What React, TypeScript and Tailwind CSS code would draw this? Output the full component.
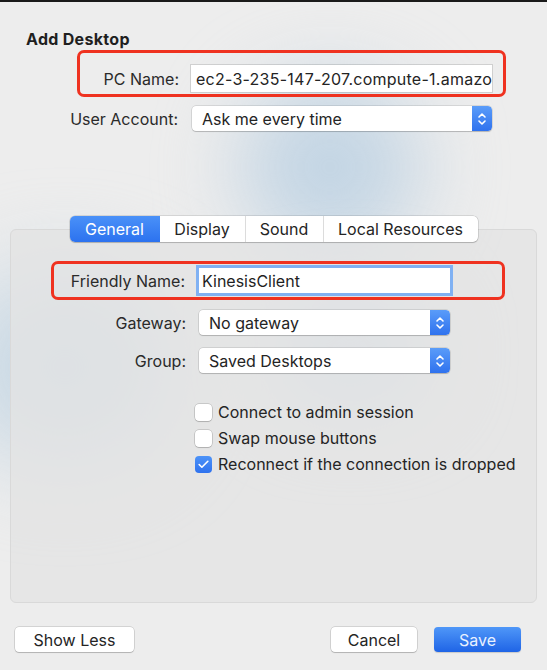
import { Check } from 'lucide-react';

function Stepper() {
  return (
    <div className="flex h-full w-[20px] shrink-0 flex-col items-center justify-center rounded-r-[4px] bg-[linear-gradient(180deg,#5a9cf9_0%,#2f72ee_100%)]">
      <svg width="10" height="16" viewBox="0 0 10 16" fill="none" stroke="white" strokeWidth="1.6" strokeLinecap="round" strokeLinejoin="round">
        <path d="M2 6 L5 3 L8 6" />
        <path d="M2 10 L5 13 L8 10" />
      </svg>
    </div>
  );
}

function Select({ value, width }: { value: string; width: string }) {
  return (
    <div className={`flex h-[25px] ${width} items-center overflow-hidden rounded-[4px] bg-white shadow-[0_0_0_0.5px_rgba(0,0,0,0.18),0_1px_1px_rgba(0,0,0,0.15)]`}>
      <div className="flex-1 truncate pl-[10px] text-[16px] text-[#242424]">{value}</div>
      <Stepper />
    </div>
  );
}

function CheckRow({ label, checked }: { label: string; checked?: boolean }) {
  return (
    <div className="flex h-[26px] items-center gap-[6px]">
      {checked ? (
        <div className="flex h-[17px] w-[17px] items-center justify-center rounded-[4px] bg-[linear-gradient(180deg,#4d93f8_0%,#2f72ee_100%)]">
          <Check size={13} strokeWidth={3} color="white" />
        </div>
      ) : (
        <div className="h-[17px] w-[17px] rounded-[4px] bg-white shadow-[0_0_0_0.5px_rgba(0,0,0,0.25),0_1px_1px_rgba(0,0,0,0.12)]" />
      )}
      <span className="text-[16px] text-[#242424]">{label}</span>
    </div>
  );
}

export default function App() {
  const tabs = ['General', 'Display', 'Sound', 'Local Resources'];
  const tabWidths = ['w-[90px]', 'w-[85px]', 'w-[78px]', 'w-[155px]'];

  return (
    <div
      className="relative h-[670px] w-[547px] overflow-hidden border-t-2 border-[#1a1a1a] bg-[#ededed] text-[#242424]"
      style={{ fontFamily: 'Inter, "Noto Sans", sans-serif' }}
    >
      {/* soft blue blur behind the dialog */}
      <div className="pointer-events-none absolute left-[240px] top-[80px] h-[170px] w-[180px] rounded-full bg-[#c3d5e4] blur-[40px]" />
      <div className="pointer-events-none absolute left-[-40px] top-[270px] h-[190px] w-[210px] rounded-full bg-[#c6d7e4] blur-[45px]" />
      <div className="pointer-events-none absolute left-[270px] top-[290px] h-[120px] w-[160px] rounded-full bg-[#c8d9e6] blur-[40px]" />

      <div className="relative flex flex-col">
        <div className="ml-[26px] mt-[28px] text-[16px] font-bold leading-[19px] tracking-[0.3px] text-[#1f1f1f]">Add Desktop</div>

        {/* PC Name */}
        <div className="ml-[77px] mt-[1px] h-[47px] w-[429px] rounded-[7px] border-[3px] border-[#ef3220] pt-[12px]">
          <div className="flex items-center">
            <div className="w-[99px] text-right text-[16px] text-[#2a2a2a]">PC Name:</div>
            <div className="ml-[12px] flex h-[27px] w-[301px] items-center overflow-hidden bg-white shadow-[0_0_0_1px_rgba(0,0,0,0.12)]">
              <span className="whitespace-nowrap pl-[5px] text-[16px] tracking-[0.25px] text-[#242424]">ec2-3-235-147-207.compute-1.amazo</span>
            </div>
          </div>
        </div>

        {/* User Account */}
        <div className="mt-[9px] flex items-center">
          <div className="w-[178px] text-right text-[16px] text-[#2a2a2a]">User Account:</div>
          <div className="ml-[14px]">
            <Select value="Ask me every time" width="w-[300px]" />
          </div>
        </div>

        {/* Tab view */}
        <div className="mt-[85px] flex flex-col">
          <div className="relative z-10 -mb-[13px] flex justify-center">
            <div className="flex h-[26px] overflow-hidden rounded-[5px] bg-white shadow-[0_0_0_0.5px_rgba(0,0,0,0.2),0_1px_1px_rgba(0,0,0,0.15)]">
              {tabs.map((t, i) => (
                <div
                  key={t}
                  className={`flex ${tabWidths[i]} items-center justify-center text-[16px] ${
                    i === 0
                      ? 'bg-[linear-gradient(180deg,#4a91f8_0%,#2c72ef_100%)] text-white'
                      : 'border-l border-[#dcdcdc] text-[#242424]'
                  } ${i === 1 ? 'border-l-0' : ''}`}
                >
                  {t}
                </div>
              ))}
            </div>
          </div>

          <div className="mx-[10px] h-[374px] rounded-[6px] border border-[#d9d9d9] bg-[#e3e3e3]/80 pt-[31px]">
            {/* Friendly Name */}
            <div className="ml-[40px] flex h-[39px] w-[454px] items-center rounded-[7px] border-[3px] border-[#ef3220]">
              <div className="w-[131px] text-right text-[16px] text-[#2a2a2a]">Friendly Name:</div>
              <div className="ml-[14px] flex h-[25px] w-[251px] items-center bg-white ring-[3px] ring-[#80b1f3]">
                <span className="pl-[3px] text-[16px] text-[#1f1f1f]">KinesisClient</span>
              </div>
            </div>

            <div className="mt-[10px] flex items-center">
              <div className="w-[175px] text-right text-[16px] text-[#2a2a2a]">Gateway:</div>
              <div className="ml-[13px]">
                <Select value="No gateway" width="w-[251px]" />
              </div>
            </div>

            <div className="mt-[13px] flex items-center">
              <div className="w-[175px] text-right text-[16px] text-[#2a2a2a]">Group:</div>
              <div className="ml-[13px]">
                <Select value="Saved Desktops" width="w-[251px]" />
              </div>
            </div>

            <div className="ml-[184px] mt-[26px] flex flex-col">
              <CheckRow label="Connect to admin session" />
              <CheckRow label="Swap mouse buttons" />
              <CheckRow label="Reconnect if the connection is dropped" checked />
            </div>
          </div>
        </div>

        {/* Footer buttons */}
        <div className="mt-[24px] flex items-center px-[15px]">
          <button className="flex h-[25px] w-[119px] items-center justify-center rounded-[4px] bg-white text-[16px] text-[#242424] shadow-[0_0_0_0.5px_rgba(0,0,0,0.22),0_1px_1px_rgba(0,0,0,0.15)]">
            Show Less
          </button>
          <div className="flex-1" />
          <button className="flex h-[25px] w-[86px] items-center justify-center rounded-[4px] bg-white text-[16px] text-[#242424] shadow-[0_0_0_0.5px_rgba(0,0,0,0.22),0_1px_1px_rgba(0,0,0,0.15)]">
            Cancel
          </button>
          <button className="ml-[17px] mr-[11px] flex h-[25px] w-[87px] items-center justify-center rounded-[4px] bg-[linear-gradient(180deg,#4f97f8_0%,#1f64e6_100%)] text-[16px] text-[#e8f1ff] shadow-[0_1px_1px_rgba(0,0,0,0.15)]">
            Save
          </button>
        </div>
      </div>
    </div>
  );
}
